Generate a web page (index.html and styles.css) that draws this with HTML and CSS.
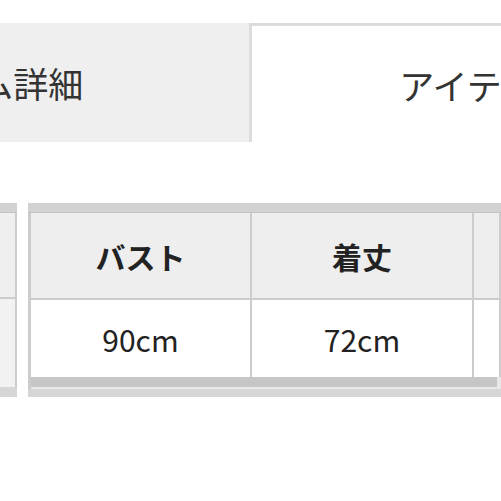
FILE: index.html
```html
<!DOCTYPE html>
<html lang="ja">
<head>
<meta charset="utf-8">
<link rel="stylesheet" href="styles.css">
</head>
<body>
<div class="page">
  <div class="tabs">
    <div class="tab tab-inactive">アイテム詳細</div>
    <div class="tab tab-active">アイテムサイズ</div>
  </div>
  <div class="sizes">
    <div class="fixed">
      <div class="band-top"></div>
      <div class="fixed-head"></div>
      <div class="fixed-data"></div>
      <div class="band-bottom"></div>
    </div>
    <div class="gap"></div>
    <div class="scroll">
      <div class="band-top"></div>
      <div class="grid">
        <div class="cell head">バスト</div>
        <div class="cell head">着丈</div>
        <div class="cell head"></div>
        <div class="cell data">90cm</div>
        <div class="cell data">72cm</div>
        <div class="cell data"></div>
      </div>
      <div class="scrollbar"><div class="thumb"></div></div>
      <div class="band-bottom"></div>
    </div>
  </div>
</div>
</body>
</html>
```

FILE: styles.css
```css
html, body {
  margin: 0;
  padding: 0;
  background: #fff;
}
body {
  font-family: "Noto Sans CJK JP", "Noto Sans", sans-serif;
  color: #333;
}
.page {
  width: 501px;
  height: 501px;
  overflow: hidden;
}
.tabs {
  display: flex;
  margin-top: 23px;
  margin-left: -289px;
  width: max-content;
}
.tab {
  width: 538px;
  height: 119px;
  box-sizing: border-box;
  display: flex;
  align-items: center;
  justify-content: center;
  font-size: 35px;
  color: #333;
}
.tab-inactive {
  background: #efefef;
}
.tab-active {
  background: #fff;
  border-left: 3px solid #dcdcdc;
  border-top: 3px solid #dcdcdc;
}
.sizes {
  display: flex;
  margin-top: 61px;
  height: 194px;
}
.fixed {
  width: 17px;
  display: flex;
  flex-direction: column;
}
.band-top {
  height: 9px;
  background: #d2d2d2;
  border-bottom: 1px solid #c4c4c4;
}
.fixed-head {
  height: 84px;
  background: #efefef;
  border-right: 2px solid #cccccc;
  border-bottom: 2px solid #cccccc;
}
.fixed-data {
  flex: 1;
  background: #f2f2f2;
  border-right: 2px solid #cccccc;
}
.band-bottom {
  height: 8px;
  background: #d6d6d6;
}
.fixed .band-bottom {
  height: 10px;
}
.gap {
  width: 11px;
  background: #fff;
}
.scroll {
  flex: 1;
  display: flex;
  flex-direction: column;
}
.grid {
  display: grid;
  grid-template-columns: 221px 222px 1fr;
  border-left: 3px solid #cccccc;
}
.cell {
  border-right: 2px solid #cccccc;
  display: flex;
  align-items: center;
  justify-content: center;
  font-size: 30px;
  color: #222;
}
.head {
  height: 85px;
  background: #eeeeee;
  font-weight: 700;
}
.data {
  height: 77px;
  background: #fff;
  border-top: 2px solid #cccccc;
  font-weight: 400;
}
.scrollbar {
  height: 12px;
  background: #e8e8e8;
  border-left: 3px solid #cccccc;
}
.thumb {
  height: 10px;
  margin-right: 4px;
  background: #c6c6c6;
}
```
